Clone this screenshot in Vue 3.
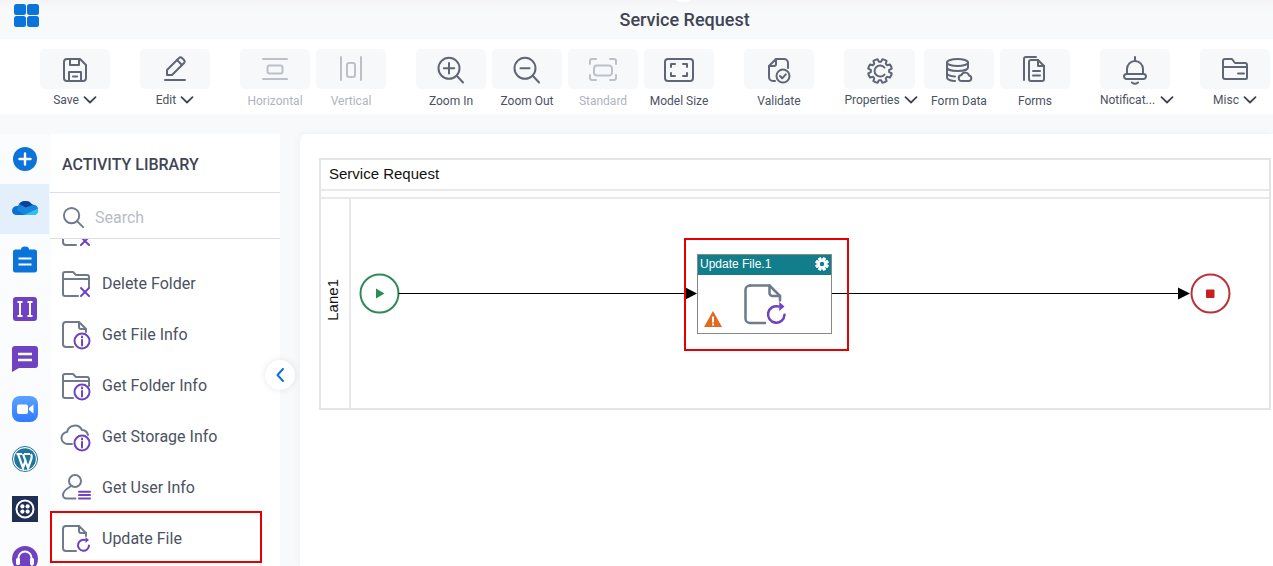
<script setup>
const gear = (cx, cy, r1, r2, n) => {
  const pts = []
  const step = (Math.PI * 2) / n
  for (let i = 0; i < n; i++) {
    const a = i * step - Math.PI / 2
    const list = [
      [r1, a - step * 0.5], [r1, a - step * 0.26], [r2, a - step * 0.14], [r2, a + step * 0.14], [r1, a + step * 0.26]
    ]
    for (const [r, t] of list) pts.push([cx + r * Math.cos(t), cy + r * Math.sin(t)])
  }
  return 'M' + pts.map(p => p[0].toFixed(2) + ' ' + p[1].toFixed(2)).join('L') + 'z'
}

const groups = [
  [{ label: 'Save', caret: true, d: ['M8 6h13l6 6v13a3 3 0 0 1-3 3H8a3 3 0 0 1-3-3V9a3 3 0 0 1 3-3z', 'M11 6v6h9V6', 'M10 28v-9h12v9', 'M14 23.5h4'] }],
  [{ label: 'Edit', caret: true, d: ['M8 22v-5L20 5a2 2 0 0 1 3 0l2 2a2 2 0 0 1 0 3L13 22z', 'M18 7l5 5', 'M6 27h20'] }],
  [
    { label: 'Horizontal', off: true, d: ['M4 6h24', 'M4 26h24', 'M10.5 12.5h11a2 2 0 0 1 2 2v4a2 2 0 0 1-2 2h-11a2 2 0 0 1-2-2v-4a2 2 0 0 1 2-2z'] },
    { label: 'Vertical', off: true, d: ['M6 4v23', 'M26 4v23', 'M14 10h4a2 2 0 0 1 2 2v10a2 2 0 0 1-2 2h-4a2 2 0 0 1-2-2V12a2 2 0 0 1 2-2z'] }
  ],
  [
    { label: 'Zoom In', d: ['M14 4.8a10.5 10.5 0 1 0 0 21a10.5 10.5 0 1 0 0-21z', 'M22 23l6 6.5', 'M14 10v10.5', 'M8.8 15.3h10.4'] },
    { label: 'Zoom Out', d: ['M14 4.8a10.5 10.5 0 1 0 0 21a10.5 10.5 0 1 0 0-21z', 'M22 23l6 6.5', 'M9.5 15.3h9'] },
    { label: 'Standard', off: true, d: ['M3 11V8a2 2 0 0 1 2-2h4', 'M23 6h4a2 2 0 0 1 2 2v3', 'M29 22v3a2 2 0 0 1-2 2h-4', 'M9 27H5a2 2 0 0 1-2-2v-3', 'M10 12.5h12a3 3 0 0 1 3 3v4a3 3 0 0 1-3 3H10a3 3 0 0 1-3-3v-4a3 3 0 0 1 3-3z'] },
    { label: 'Model Size', d: ['M5 6h22a3 3 0 0 1 3 3v16a3 3 0 0 1-3 3H5a3 3 0 0 1-3-3V9a3 3 0 0 1 3-3z', 'M8 14v-3h4', 'M24 14v-3h-4', 'M8 20v3h4', 'M24 20v3h-4'] }
  ],
  [{ label: 'Validate', d: ['M13 6h8a4 4 0 0 1 4 4v5', 'M6 13v11a4 4 0 0 0 4 4h2', 'M6 13l7-7v5a2 2 0 0 1-2 2z', 'M20 16.5a6.5 6.5 0 1 0 0 13a6.5 6.5 0 1 0 0-13z', 'M17 23l2.2 2.3 3.6-4'] }],
  [
    { label: 'Properties', caret: true, wide: true, d: [gear(16, 18, 12, 9.2, 8), 'M20.5 14.5a5.6 5.6 0 1 0 0 7'] },
    { label: 'Form Data', d: ['M14.5 6c5.8 0 10.5 1.6 10.5 3.5S20.3 13 14.5 13 4 11.4 4 9.5 8.7 6 14.5 6z', 'M4 9.5v15c0 2 4 3.5 8 3.5', 'M4 14.5C4 16.5 8.7 18 14.5 18S25 16.5 25 14.5V9.5', 'M4 20c0 2 4 3.2 8 3.5', 'M19 28a3 3 0 0 1-.5-6 4 4 0 0 1 7.5.5 2.8 2.8 0 0 1 0 5.5z'] },
    { label: 'Forms', d: ['M12 7h7l6 6v13a2 2 0 0 1-2 2H12a2 2 0 0 1-2-2V9a2 2 0 0 1 2-2z', 'M5 27V6a2 2 0 0 1 2-2h10', 'M19 7v6h6', 'M14 18h7', 'M14 22.5h7'] }
  ],
  [{ label: 'Notificat...', caret: true, caretGap: true, d: ['M16 4v3', 'M8 21v-5a8 8 0 0 1 16 0v5', 'M7.5 21h17a2.5 2.5 0 0 1 0 5h-17a2.5 2.5 0 0 1 0-5z', 'M13 29.5q3 2.5 6 0'] }],
  [{ label: 'Misc', caret: true, d: ['M4 12V8a2 2 0 0 1 2-2h7l3 4h10a2 2 0 0 1 2 2v13a1 1 0 0 1-1 1H6a2 2 0 0 1-2-2v-9z', 'M4 14h24', 'M19 20.5h6'] }]
]

const docPath = ['M6 3h13l7 7v6', 'M6 3a3 3 0 0 0-3 3v19a3 3 0 0 0 3 3h10', 'M19 3v5a2 2 0 0 0 2 2h5']
const folderPath = ['M3 26V6a2 2 0 0 1 2-2h8l3 3h11a2 2 0 0 1 2 2v10', 'M3 11h26', 'M3 26a2 2 0 0 0 2 2h13']
const crossMark = ['M21 20l8 8', 'M29 20l-8 8']
const infoMark = ['M22 14.5a7.5 7.5 0 1 0 0 15a7.5 7.5 0 1 0 0-15z', 'M22 21v5.5', 'M22 17.6v1']
const refreshMark = ['M25 17a5.500 5.500 0 1 0 4 5.500']
const refreshHead = ['M25.500 14l3.500 3-3.500 3z']
const rows = [
  { label: '', grey: docPath, purple: crossMark },
  { label: 'Delete Folder', grey: folderPath, purple: crossMark },
  { label: 'Get File Info', grey: ['M6 3h13l7 7v3', 'M6 3a3 3 0 0 0-3 3v19a3 3 0 0 0 3 3h7', 'M19 3v5a2 2 0 0 0 2 2h5'], purple: infoMark },
  { label: 'Get Folder Info', grey: ['M3 26V6a2 2 0 0 1 2-2h8l3 3h11a2 2 0 0 1 2 2v7', 'M3 11h26', 'M3 26a2 2 0 0 0 2 2h8'], purple: infoMark },
  { label: 'Get Storage Info', grey: ['M12 23H8a6 6 0 0 1-1-12 8 8 0 0 1 15-2 6.5 6.5 0 0 1 6 5'], purple: infoMark },
  { label: 'Get User Info', grey: ['M15 3a6 6 0 1 0 0 12a6 6 0 1 0 0-12z', 'M10.500 14.500C6 17 3 20 3 23a3.500 3.500 0 0 0 3.500 3.500h9'], purple: ['M19 19.700h11', 'M19 23h11', 'M19 26.500h11'] },
  { label: 'Update File', selected: true, grey: ['M6 3h13l7 7v3', 'M6 3a3 3 0 0 0-3 3v19a3 3 0 0 0 3 3h10', 'M19 3v5a2 2 0 0 0 2 2h5'], purple: refreshMark, solid: refreshHead }
]
const nodeGear = gear(822, 264, 6.5, 4.6, 8)
</script>

<template>
  <div class="page">
    <header class="topbar">
      <span class="notch"></span>
      <div class="apps"><i></i><i></i><i></i><i></i></div>
      <h1 class="title">Service Request</h1>
    </header>

    <nav class="toolbar">
      <div v-for="(group, g) in groups" :key="g" class="tool-group">
        <div v-for="tool in group" :key="tool.label" class="tool" :class="{ off: tool.off, wide: tool.wide, hascaret: tool.caret }">
          <div class="tool-btn">
            <svg width="32" height="32" viewBox="0 0 32 32" fill="none" class="stroke-icon">
              <path v-for="d in tool.d" :key="d" :d="d" />
            </svg>
          </div>
          <div class="tool-label">
            <span>{{ tool.label }}</span>
            <svg v-if="tool.caret" class="caret" :class="{ far: tool.caretGap }" width="14" height="8" viewBox="0 0 14 8" fill="none"><path d="M1.5 1.2L7 6.5l5.5-5.3" /></svg>
          </div>
        </div>
      </div>
    </nav>

    <main class="main">
      <aside class="rail">
        <div class="rail-item">
          <svg width="26" height="26" viewBox="0 0 26 26"><circle cx="13" cy="13" r="12" fill="#0a74da" /><path d="M13 7.5v11M7.5 13h11" stroke="#fff" stroke-width="2.4" stroke-linecap="round" /></svg>
        </div>
        <div class="rail-item active">
          <svg class="cloud" width="28" height="20" viewBox="0 0 28 20">
            <defs><clipPath id="od"><path d="M1 13a5 5 0 0 1 6-5a8 8 0 0 1 14-1.500a5.500 5.500 0 0 1 6 6a4.500 4.500 0 0 1-4 4.500H5a4.500 4.500 0 0 1-4-4z" /></clipPath></defs>
            <g clip-path="url(#od)">
              <rect width="28" height="20" fill="#0a6fd6" />
              <path d="M7 0h15v6.500L14.500 9.500 8 6z" fill="#103f96" />
              <path d="M8 6l6.500 3.500L28 6v7L14 17.500 6 12z" fill="#1786de" />
              <path d="M11 18L28 10v9z" fill="#35bdf0" />
            </g>
          </svg>
        </div>
        <div class="rail-item">
          <svg width="26" height="28" viewBox="0 0 26 28"><path d="M3.500 4.500H9a4 3 0 0 1 8 0h5.500A2.500 2.500 0 0 1 25 7v18a2.500 2.500 0 0 1-2.500 2.500h-19A2.500 2.500 0 0 1 1 25V7a2.500 2.500 0 0 1 2.500-2.500z" fill="#0a74da" /><path d="M6.500 13.500h13M6.500 19.500h13" stroke="#fff" stroke-width="2.200" /></svg>
        </div>
        <div class="rail-item">
          <svg width="26" height="26" viewBox="0 0 26 26"><rect x="1" y="1" width="24" height="24" rx="3" fill="#6f42c1" /><path d="M5.500 6h5M8 6v14M5.500 20h5M15.500 6h5M18 6v14M15.500 20h5" stroke="#fff" stroke-width="2" /></svg>
        </div>
        <div class="rail-item">
          <svg width="28" height="28" viewBox="0 0 28 28"><path d="M4 1h20a3 3 0 0 1 3 3v16a3 3 0 0 1-3 3H8l-7 4V4a3 3 0 0 1 3-3z" fill="#6f42c1" /><path d="M7 9h14M7 15h14" stroke="#fff" stroke-width="2.400" /></svg>
        </div>
        <div class="rail-item">
          <svg width="28" height="28" viewBox="0 0 28 28"><defs><linearGradient id="zm" x1="0" y1="0" x2="0" y2="1"><stop offset="0" stop-color="#5ba2ff" /><stop offset="1" stop-color="#2f7bff" /></linearGradient></defs><rect x="1" y="1" width="26" height="26" rx="8" fill="url(#zm)" /><rect x="6" y="9.500" width="11" height="9.500" rx="2" fill="#fff" /><path d="M18 13l4.500-3.500v9L18 15z" fill="#fff" /></svg>
        </div>
        <div class="rail-item">
          <svg width="28" height="28" viewBox="0 0 28 28"><circle cx="14" cy="14" r="12.500" fill="#fff" stroke="#21759b" stroke-width="1" /><circle cx="14" cy="14" r="10.800" fill="#21759b" /><path d="M5.500 9h5.500M13 9h6M7 9l5 14 2.800-8.500M12 9l5 14 3.500-9.500c.7-2 .2-3.200-.5-4.500" stroke="#fff" stroke-width="2.200" fill="none" /></svg>
        </div>
        <div class="rail-item">
          <svg width="26" height="26" viewBox="0 0 26 26"><rect width="26" height="26" fill="#1f2f54" /><circle cx="13" cy="13" r="8.500" fill="none" stroke="#fff" stroke-width="2" /><circle cx="10.400" cy="10.400" r="2.100" fill="#fff" /><circle cx="15.600" cy="10.400" r="2.100" fill="#fff" /><circle cx="10.400" cy="15.600" r="2.100" fill="#fff" /><circle cx="15.600" cy="15.600" r="2.100" fill="#fff" /></svg>
        </div>
        <div class="rail-item">
          <svg width="28" height="28" viewBox="0 0 28 28"><circle cx="14" cy="14" r="13" fill="#6f42c1" /><path d="M7.500 15v-2a6.500 6.500 0 0 1 13 0v2" stroke="#fff" stroke-width="2" fill="none" /><rect x="5" y="13" width="4" height="7" rx="1.500" fill="#fff" /><rect x="19" y="13" width="4" height="7" rx="1.500" fill="#fff" /><path d="M21 20c0 3-3 4-5 4" stroke="#fff" stroke-width="1.500" fill="none" /></svg>
        </div>
      </aside>

      <section class="library">
        <h2 class="lib-title">ACTIVITY LIBRARY</h2>
        <div class="lib-search">
          <svg width="23" height="23" viewBox="0 0 24 24" fill="none"><circle cx="10" cy="10" r="8" stroke="#6f7a8c" stroke-width="2" /><path d="M16 16l6 6" stroke="#6f7a8c" stroke-width="2" stroke-linecap="round" /></svg>
          <span>Search</span>
        </div>
        <div class="lib-scroll">
          <ul class="lib-list">
            <li v-for="(row, i) in rows" :key="i" class="lib-row" :class="{ selected: row.selected }">
              <svg width="32" height="32" viewBox="0 0 32 32" fill="none" class="lib-icon">
                <path v-for="d in row.grey" :key="d" :d="d" class="grey" />
                <path v-for="d in row.purple" :key="d" :d="d" class="purple" />
                <path v-for="d in row.solid" :key="d" :d="d" class="solid" />
              </svg>
              <span v-if="row.label">{{ row.label }}</span>
            </li>
          </ul>
        </div>
        <button class="collapse" aria-label="Collapse">
          <svg width="10" height="16" viewBox="0 0 10 16" fill="none"><path d="M8 2L2.500 8 8 14" stroke="#0a74da" stroke-width="2" stroke-linecap="round" stroke-linejoin="round" /></svg>
        </button>
      </section>

      <section class="canvas">
        <div class="pool">
          <div class="pool-title">Service Request</div>
          <div class="pool-band"></div>
          <div class="lane">
            <div class="lane-label"><span>Lane1</span></div>
          </div>
        </div>

        <svg class="wires" width="973" height="432" viewBox="300 134 973 432" fill="none">
          <circle cx="379.500" cy="293.500" r="19" stroke="#2e8b57" stroke-width="2" fill="#fff" />
          <path d="M376 288.500l8.500 5-8.500 5z" fill="#2e8b57" />
          <path d="M398.500 293.500H686M832 293.500H1180" stroke="#000" stroke-width="1" />
          <path d="M685.500 287.500l11.500 6-11.500 6zM1178 287.500l12 6-12 6z" fill="#000" />
          <circle cx="1210.500" cy="293.500" r="19" stroke="#b8323a" stroke-width="2" fill="#fff" />
          <rect x="1206" y="289.500" width="8.500" height="8.500" rx="1" fill="#c81e1e" />
        </svg>

        <div class="node-mark"></div>
        <div class="node">
          <div class="node-head">Update File.1</div>
          <svg class="node-gear" width="16" height="16" viewBox="814 256 16 16"><path :d="nodeGear" fill="#fff" stroke="#fff" stroke-width="1" stroke-linejoin="round" /><circle cx="822" cy="264" r="2.200" fill="#127d8b" /></svg>
          <svg class="node-warn" width="20" height="18" viewBox="0 0 20 18"><path d="M10 1l9 16H1z" fill="#e06a1f" /><path d="M10 6.500v6" stroke="#fff" stroke-width="2" /><path d="M10 13.500v2" stroke="#fff" stroke-width="2" /></svg>
          <svg class="node-icon" width="48" height="48" viewBox="0 0 32 32" fill="none">
            <path v-for="d in rows[6].grey" :key="d" :d="d" class="grey thin" />
            <path v-for="d in rows[6].purple" :key="d" :d="d" class="purple thin" />
            <path v-for="d in rows[6].solid" :key="d" :d="d" class="solid" />
          </svg>
        </div>
      </section>
    </main>
  </div>
</template>

<style>
html, body { margin: 0; background: #f8f9fb; overflow: hidden; }
</style>

<style scoped>
* { box-sizing: border-box; }
.page {
  width: 1273px;
  height: 566px;
  overflow: hidden;
  display: flex;
  flex-direction: column;
  background: #f8f9fb;
  font-family: Roboto, "Liberation Sans", sans-serif;
  color: #4b5263;
}
.topbar {
  position: relative;
  height: 39px;
  flex: none;
  display: flex;
  align-items: center;
  padding-left: 14px;
  background: linear-gradient(#f5f5f7, #f8f9fb 12px);
}
.notch {
  position: absolute;
  left: 675px;
  top: -4px;
  width: 16px;
  height: 6px;
  border-radius: 50%;
  background: #fff;
}
.apps {
  display: grid;
  grid-template-columns: 11.500px 11.500px;
  grid-template-rows: 10.500px 10.500px;
  gap: 1.500px;
  align-self: flex-start;
  margin-top: 4px;
}
.apps i {
  background: #0a74da;
  border-radius: 2.500px;
}
.title {
  margin: 0 0 1px 581px;
  font-size: 18px;
  font-weight: 500;
  color: #3f4554;
  white-space: nowrap;
}
.toolbar {
  height: 75px;
  flex: none;
  background: #fff;
  display: flex;
  gap: 30px;
  padding: 10px 0 0 40px;
}
.tool-group {
  display: flex;
  gap: 6px;
}
.tool {
  width: 70px;
  display: flex;
  flex-direction: column;
}
.tool.wide { width: 74px; }
.tool-btn {
  width: 70px;
  height: 40px;
  background: #f7f8fa;
  border-radius: 5px;
  display: flex;
  align-items: center;
  justify-content: center;
}
.wide .tool-btn { width: 71px; }
.stroke-icon path {
  stroke: #5f6675;
  stroke-width: 2;
  stroke-linecap: round;
  stroke-linejoin: round;
}
.off .stroke-icon path { stroke: #bcc0c9; }
.tool-label {
  margin-top: 5px;
  height: 14px;
  display: flex;
  align-items: center;
  justify-content: center;
  gap: 4px;
  font-size: 12px;
  line-height: 14px;
  white-space: nowrap;
  color: #4b5263;
}
.hascaret .tool-label { margin-top: 4px; }
.off .tool-label { color: #b0b4bd; }
.caret { flex: none; }
.caret path {
  stroke: #3f4554;
  stroke-width: 1.800;
  stroke-linecap: round;
  stroke-linejoin: round;
}
.caret.far { margin: 0 -4px 0 1px; }
.main {
  flex: 1;
  min-height: 0;
  display: flex;
  padding-top: 20px;
}
.rail {
  width: 49px;
  flex: none;
  margin-right: 1px;
  background: #fbfcfd;
}
.rail-item {
  height: 50px;
  padding-left: 1px;
  display: flex;
  align-items: center;
  justify-content: center;
}
.rail-item.active { background: #e3effa; }
.cloud { margin-top: -3px; }
.library {
  position: relative;
  width: 230px;
  flex: none;
  margin-right: 20px;
  background: #fff;
  display: flex;
  flex-direction: column;
}
.lib-title {
  margin: 0;
  height: 59px;
  flex: none;
  padding: 21px 0 0 12px;
  font-size: 16px;
  font-weight: 500;
  line-height: 20px;
  color: #3f4554;
  border-bottom: 1px solid #dcdde6;
}
.lib-search {
  height: 46px;
  flex: none;
  display: flex;
  align-items: center;
  gap: 10px;
  padding: 3px 0 0 12px;
  font-size: 16px;
  color: #b9bcc5;
  border-bottom: 1px solid #dcdde6;
}
.lib-scroll {
  flex: 1;
  min-height: 0;
  overflow: hidden;
}
.lib-list {
  list-style: none;
  margin: -32px 0 0;
  padding: 0;
}
.lib-row {
  position: relative;
  height: 51px;
  display: flex;
  align-items: center;
  gap: 10px;
  padding-left: 10px;
  font-size: 16px;
  color: #4b5263;
}
.lib-icon { flex: none; }
.grey {
  stroke: #6f7a8c;
  stroke-width: 2;
  stroke-linecap: round;
  stroke-linejoin: round;
}
.purple {
  stroke: #6f42c1;
  stroke-width: 2;
  stroke-linecap: round;
  stroke-linejoin: round;
}
.solid { fill: #6f42c1; }
.thin { stroke-width: 1.700; }
.lib-row.selected::after {
  content: "";
  box-sizing: border-box;
  position: absolute;
  left: 0;
  top: -2px;
  width: 212px;
  height: 52px;
  border: 2px solid #e60000;
}
.collapse {
  position: absolute;
  left: 215px;
  top: 226px;
  width: 30px;
  height: 30px;
  padding: 0;
  border: none;
  border-radius: 50%;
  background: #fff;
  box-shadow: 0 0 6px rgba(0, 0, 0, 0.1);
  display: flex;
  align-items: center;
  justify-content: center;
}
.canvas {
  position: relative;
  flex: 1;
  min-width: 0;
  background: #fff;
  border-radius: 6px 0 0 0;
  box-shadow: 0 0 8px rgba(0, 0, 0, 0.05);
  padding: 24px 0 0 19px;
  font-family: "Liberation Sans", Arial, sans-serif;
}
.pool {
  width: 952px;
  height: 252px;
  border: 2px solid #e4e4e4;
  display: flex;
  flex-direction: column;
  color: #111;
}
.pool-title {
  height: 29px;
  flex: none;
  padding-left: 8px;
  font-size: 15px;
  line-height: 27px;
}
.pool-band {
  height: 10px;
  flex: none;
  border-top: 2px solid #e9e9e9;
  border-bottom: 2px solid #e9e9e9;
}
.lane {
  flex: 1;
  display: flex;
}
.lane-label {
  width: 30px;
  flex: none;
  border-right: 2px solid #e9e9e9;
  display: flex;
  align-items: center;
  justify-content: center;
  padding: 0 4px 8px 0;
}
.lane-label span {
  writing-mode: vertical-rl;
  transform: rotate(180deg);
  font-size: 15px;
  line-height: 16px;
}
.wires {
  position: absolute;
  left: 0;
  top: 0;
  pointer-events: none;
}
.node-mark {
  position: absolute;
  left: 384px;
  top: 104px;
  width: 165px;
  height: 113px;
  border: 2px solid #e60000;
}
.node {
  position: absolute;
  left: 397px;
  top: 120px;
  width: 135px;
  height: 80px;
  background: #fff;
  border: 1px solid #888;
}
.node-head {
  height: 20px;
  background: #127d8b;
  color: #fff;
  font-size: 12px;
  line-height: 19px;
  padding-left: 2px;
}
.node-gear { position: absolute; left: 116px; top: 1px; }
.node-warn { position: absolute; left: 5px; top: 55px; }
.node-icon { position: absolute; left: 43px; top: 26px; }
</style>
